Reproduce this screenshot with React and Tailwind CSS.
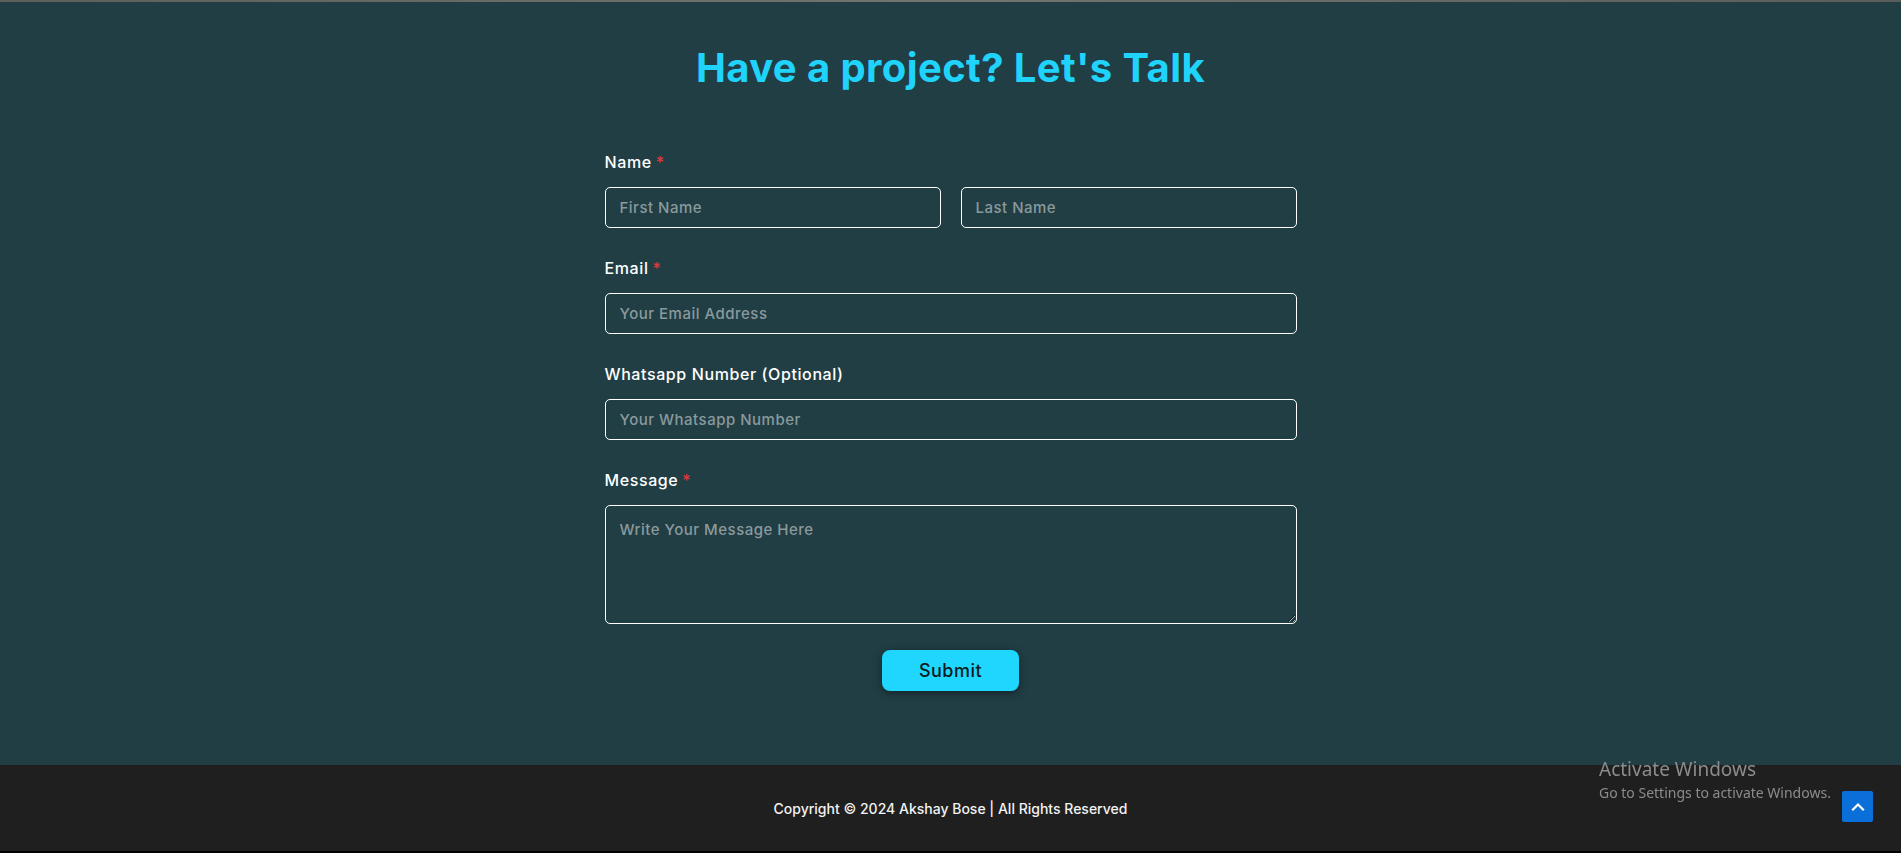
import React from "react";

const font = { fontFamily: "Inter, 'Open Sans', sans-serif" };

function Label({ children, required }) {
  return (
    <label className="block text-[16px] leading-6 font-medium tracking-[0.6px] text-white mb-[13px]">
      {children}
      {required && <span className="text-[#e0393e] ml-[4px]">*</span>}
    </label>
  );
}

const inputCls =
  "w-full h-[41px] bg-transparent border border-white rounded-[5px] px-[14px] text-[15px] tracking-[0.5px] font-medium text-white placeholder:text-[#8a9a9c] outline-none";

export default function App() {
  return (
    <div className="w-full min-h-screen flex flex-col bg-[#213e45]" style={font}>
      <div className="h-[2px] bg-gradient-to-r from-[#5c605b] via-[#707570] to-[#5a5e5a]" />
      <section className="bg-[#213e45] pt-[42px] pb-[74px] flex flex-col items-center">
        <h1 className="text-[40px] leading-[48px] font-bold text-[#1fd3fb] tracking-[0.4px]">
          Have a project? Let's Talk
        </h1>
        <form className="w-[692px] mt-[58px] flex flex-col" onSubmit={(e) => e.preventDefault()}>
          <div>
            <Label required>Name</Label>
            <div className="grid grid-cols-2 gap-[20px]">
              <input className={inputCls} placeholder="First Name" />
              <input className={inputCls} placeholder="Last Name" />
            </div>
          </div>
          <div className="mt-[28px]">
            <Label required>Email</Label>
            <input className={inputCls} placeholder="Your Email Address" />
          </div>
          <div className="mt-[28px]">
            <Label>Whatsapp Number (Optional)</Label>
            <input className={inputCls} placeholder="Your Whatsapp Number" />
          </div>
          <div className="mt-[28px]">
            <Label required>Message</Label>
            <textarea
              className="block w-full h-[119px] bg-transparent border border-white rounded-[5px] px-[14px] py-[14px] text-[15px] tracking-[0.5px] leading-5 font-medium text-white placeholder:text-[#8a9a9c] outline-none"
              placeholder="Write Your Message Here"
            />
          </div>
          <div className="mt-[26px] flex justify-center">
            <button
              type="submit"
              className="w-[137px] h-[41px] rounded-[8px] bg-[#1fd6ff] text-[#0e1a1d] text-[18px] font-medium tracking-[0.5px] shadow-[0_2px_8px_rgba(0,0,0,0.45)]"
            >
              Submit
            </button>
          </div>
        </form>
      </section>
      <footer className="h-[86px] bg-[#1f1f1f] flex items-center justify-center border-b-2 border-black box-content">
        <p className="text-[14px] font-medium text-[#f2f2f2]">
          Copyright © 2024 Akshay Bose | All Rights Reserved
        </p>
      </footer>

      <div
        className="fixed left-[1599px] top-[757px] text-[#8c8c8c] pointer-events-none"
        style={{ fontFamily: "'Noto Sans', 'Open Sans', sans-serif" }}
      >
        <div className="text-[19px] leading-[24px]">Activate Windows</div>
        <div className="text-[14px] leading-[20px] mt-[2px]">Go to Settings to activate Windows.</div>
      </div>
      <button className="fixed left-[1842px] top-[791px] w-[31px] h-[31px] rounded-[2px] bg-[#0b6fd9] flex items-center justify-center">
        <svg width="16" height="16" viewBox="0 0 16 16" fill="none">
          <path d="M3 10.5 L8 5.5 L13 10.5" stroke="white" strokeWidth="2.2" strokeLinecap="square" />
        </svg>
      </button>
    </div>
  );
}
